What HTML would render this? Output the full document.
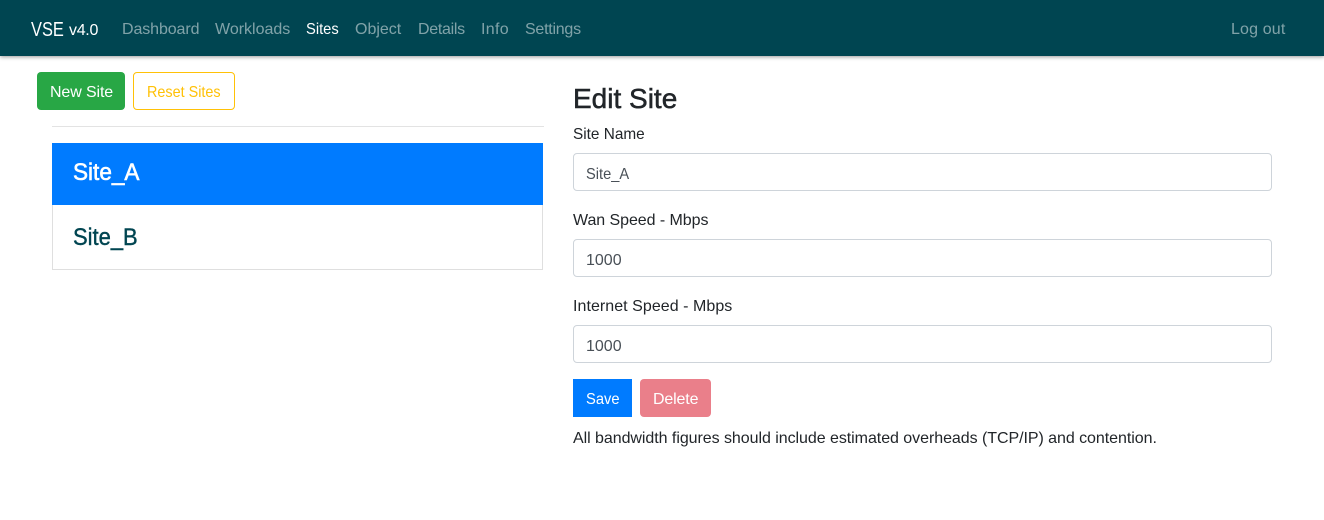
<!DOCTYPE html>
<html lang="en">
<head>
<meta charset="utf-8">
<title>VSE v4.0 - Sites</title>
<style>
*{box-sizing:border-box}
html,body{margin:0;padding:0;width:1324px;height:520px;overflow:hidden;background:#fff;font-family:"Liberation Sans",sans-serif;font-size:16px;color:#212529}
.a{position:absolute;white-space:nowrap;line-height:24px;transform-origin:0 50%}
nav{position:absolute;left:0;top:0;width:1324px;height:56px;background:#004551;box-shadow:0 1px 4px rgba(0,0,0,.4)}
.n{color:rgba(255,255,255,.5);top:18px}
.box{position:absolute}
.in{position:absolute;left:573px;width:699px;height:38px;border:1px solid #ced4da;border-radius:4px;background:#fff}
.t{color:#495057}
</style>
</head>
<body>
<nav>
<span class="a" style="left:31px;top:18px;color:#fff;font-size:20px;transform:scaleX(.82)">VSE</span>
<span class="a" style="left:69px;top:19px;color:#fff;font-size:16px;letter-spacing:-.3px">v4.0</span>
<span class="a n" style="left:122px;letter-spacing:-.1px">Dashboard</span>
<span class="a n" style="left:215px">Workloads</span>
<span class="a n" style="left:306px;color:#fff;transform:scaleX(.92)">Sites</span>
<span class="a n" style="left:355px">Object</span>
<span class="a n" style="left:418px;letter-spacing:-.3px">Details</span>
<span class="a n" style="left:481px;letter-spacing:.3px">Info</span>
<span class="a n" style="left:525px;letter-spacing:-.25px">Settings</span>
<span class="a n" style="left:1231px;letter-spacing:.15px">Log out</span>
</nav>
<div class="box" style="left:37px;top:72px;width:88px;height:38px;background:#28a745;border-radius:4px"></div>
<span class="a" style="left:50px;top:81px;color:#fff;letter-spacing:-.12px">New Site</span>
<div class="box" style="left:133px;top:72px;width:102px;height:38px;border:1px solid #ffc107;border-radius:4px"></div>
<span class="a" style="left:147px;top:81px;color:#ffc107;transform:scaleX(.9)">Reset Sites</span>
<div class="box" style="left:52px;top:126px;width:492px;height:1px;background:#e3e3e3"></div>
<div class="box" style="left:52px;top:143px;width:491px;height:62px;background:#007bff"></div>
<span class="a" style="left:73px;top:159px;color:#fff;font-size:24px;line-height:28px;transform:scaleX(.94);-webkit-text-stroke:.6px #fff">Site_A</span>
<div class="box" style="left:52px;top:205px;width:491px;height:65px;border:1px solid #dfdfdf;border-top:0"></div>
<span class="a" style="left:73px;top:224px;color:#004551;font-size:24px;line-height:28px;transform:scaleX(.915);-webkit-text-stroke:.4px #004551">Site_B</span>
<span class="a" style="left:573px;top:82px;font-size:28px;line-height:34px;-webkit-text-stroke:.5px #212529">Edit Site</span>
<span class="a" style="left:573px;top:123px;transform:scaleX(.96)">Site Name</span>
<div class="in" style="top:153px"></div>
<span class="a t" style="left:586px;top:163px;transform:scaleX(.915)">Site_A</span>
<span class="a" style="left:573px;top:209px;letter-spacing:-.06px">Wan Speed - Mbps</span>
<div class="in" style="top:239px"></div>
<span class="a t" style="left:586px;top:249px">1000</span>
<span class="a" style="left:573px;top:295px;letter-spacing:.05px">Internet Speed - Mbps</span>
<div class="in" style="top:325px"></div>
<span class="a t" style="left:586px;top:335px">1000</span>
<div class="box" style="left:573px;top:379px;width:59px;height:38px;background:#007bff"></div>
<span class="a" style="left:586px;top:388px;color:#fff;transform:scaleX(.92)">Save</span>
<div class="box" style="left:640px;top:379px;width:71px;height:38px;background:#ea7f8a;border-radius:4px"></div>
<span class="a" style="left:653px;top:388px;color:#fff;letter-spacing:-.15px">Delete</span>
<span class="a" style="left:573px;top:427px;letter-spacing:-.05px">All bandwidth figures should include estimated overheads (TCP/IP) and contention.</span>
</body>
</html>
